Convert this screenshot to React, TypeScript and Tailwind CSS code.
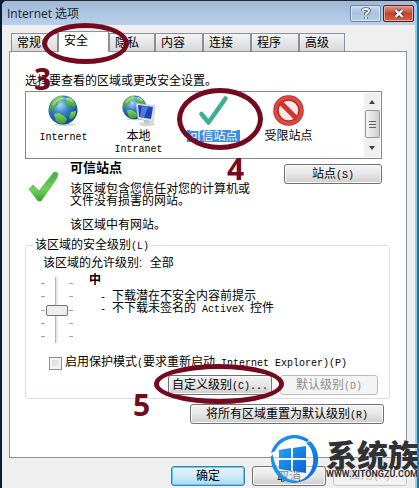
import React from "react";

const BUTTON =
  "h-5 rounded-[3px] border border-[#707070] bg-linear-to-b from-[#f3f3f3] via-[#e6e6e6] to-[#cdcdcd] pt-px text-center text-[12px] leading-[14px] whitespace-nowrap shadow-[inset_0_0_0_1px_#fafafa]";

// Latin text is set in a half-width face so that two letters take one Chinese character.
function Latin({ children }: { children: React.ReactNode }) {
  return <span className="font-['Liberation_Mono',monospace] text-[10px] whitespace-pre">{children}</span>;
}

function Globe() {
  return (
    <>
      <defs>
        <radialGradient id="sea" cx="40%" cy="32%" r="70%">
          <stop offset="0" stopColor="#a9dcf5" />
          <stop offset="0.4" stopColor="#3a86d0" />
          <stop offset="1" stopColor="#123f8c" />
        </radialGradient>
        <linearGradient id="land" x1="0" y1="0" x2="0" y2="1">
          <stop offset="0" stopColor="#8fd45c" />
          <stop offset="1" stopColor="#2e9a2e" />
        </linearGradient>
      </defs>
      <ellipse cx="17" cy="29.5" rx="11" ry="1.5" fill="#cfd3d6" />
      <circle cx="15" cy="15" r="14.5" fill="url(#sea)" />
      <path d="M3 9 6 4l6-3 4 1-2 3-3 1-1 4-4 2-2 5-3-3z" fill="url(#land)" />
      <path d="m19 2 5 2 4 6-2 3-3-2-3 1-3-3 1-3z" fill="url(#land)" />
      <path d="m6 19 5-1 5 3 3 3-2 4-5 1-4-3z" fill="url(#land)" />
      <path d="m23 17 5-1-1 5-4 4-2-3z" fill="url(#land)" />
      <path d="M5 10c4-7 14-9 20-3" stroke="#fff" strokeOpacity=".35" strokeWidth="2" fill="none" />
    </>
  );
}

const zones = [
  {
    lines: [<Latin key="a">Internet</Latin>],
    icon: (
      <svg width="31" height="31" viewBox="0 0 31 31" aria-hidden="true"><Globe /></svg>
    ),
  },
  {
    lines: ["本地", <Latin key="a">Intranet</Latin>],
    icon: (
      <svg width="33" height="31" viewBox="0 0 33 31" aria-hidden="true">
        <g transform="scale(.82)"><Globe /></g>
        <ellipse cx="25" cy="29" rx="8" ry="2" fill="#d3d5d6" />
        <path d="m22 24 5 1v4l-5-1z" fill="#c4c8cc" />
        <path d="m14 8 19 3-2 16-15-3z" fill="#dfe3ea" stroke="#a9afb8" strokeWidth=".6" />
        <path d="m16 10 15 2-2 12-12-2z" fill="#1b43b5" />
        <path d="m20 11 6 1-4 11-4-1z" fill="#668bea" opacity=".75" />
      </svg>
    ),
  },
  {
    lines: ["可信站点"],
    selected: true,
    icon: (
      <svg width="31" height="31" viewBox="0 0 31 31" aria-hidden="true">
        <path d="M3.500 19 10.500 27.500 27.500 3.500" fill="none" stroke="#3fae93" strokeWidth="4.500" strokeLinejoin="round" strokeLinecap="round" />
      </svg>
    ),
  },
  {
    lines: ["受限站点"],
    icon: (
      <svg width="33" height="31" viewBox="0 0 33 31" aria-hidden="true">
        <circle cx="16.500" cy="15.500" r="12.500" fill="#fbe9e7" stroke="#b5201c" strokeWidth="5.500" />
        <circle cx="16.500" cy="15.500" r="12.800" fill="none" stroke="#dd4a42" strokeWidth="3.500" />
        <path d="m8 7 17 17" stroke="#cf332c" strokeWidth="5" />
      </svg>
    ),
  },
];

const tabs = [
  ["常规", "w-[47px]"],
  ["安全", "w-[51px]"],
  ["隐私", "w-[46px]"],
  ["内容", "w-[48px]"],
  ["连接", "w-[48px]"],
  ["程序", "w-[48px]"],
  ["高级", "w-[46px]"],
];

function Ring({ className }: { className: string }) {
  return <div className={`pointer-events-none absolute rounded-[50%] border-[5px] border-[#740a20] ${className}`} />;
}

function Digit({ className, children }: { className: string; children: React.ReactNode }) {
  return (
    <span className={`pointer-events-none absolute font-['Noto_Sans',sans-serif] text-[30px] leading-[30px] font-bold text-[#740a20] ${className}`}>
      {children}
    </span>
  );
}

export default function App() {
  return (
    <div className="relative min-h-screen overflow-hidden bg-linear-to-r from-[#0c1a38] from-50% to-[#2a6aa8] to-50% pt-px pr-[2px] pl-[2px] font-['Liberation_Sans','Noto_Sans_CJK_SC',sans-serif] text-[12px] text-black">
      <div className="absolute top-0 right-0 left-0 h-px bg-[#22262e]" />
      <main className="min-h-[calc(100vh-1px)] rounded-t-[5px] border-r-2 border-[#8fd3e8] bg-[#efefef] pr-[8px] pb-[2px] pl-[7px]">
        <header className="-mr-[8px] -ml-[7px] flex h-6 items-center rounded-t-[5px] bg-linear-to-b from-[#9fb9d6] to-[#b9d0ea] pr-[1px] pl-[5px]">
          <h1 className="flex-1 pt-[2px] font-['Open_Sans','Noto_Sans_CJK_SC',sans-serif] text-[12px] leading-4 text-[#1a1f28]">Internet 选项</h1>
          <div className="flex gap-[2px]">
            <button aria-label="帮助" className="flex h-[17px] w-[31px] items-center justify-center rounded-[2px] border border-[#6c85a5] bg-linear-to-b from-[#c8d8ea] via-[#aac2de] to-[#b8d0e8] shadow-[inset_0_0_0_1px_#dae6f2]">
              <svg width="10" height="13" viewBox="0 0 10 13" aria-hidden="true" fill="none">
                <path d="M2 4V3q0-1 3-1t3 2q0 1-3 3v1m0 2v2" stroke="#49566a" strokeWidth="3.500" />
                <path d="M2 4V3q0-1 3-1t3 2q0 1-3 3v1m0 2v2" stroke="#fff" strokeWidth="1.800" />
              </svg>
            </button>
            <button aria-label="关闭" className="flex h-[17px] w-[31px] items-center justify-center rounded-[2px] border border-[#5b1e22] bg-linear-to-b from-[#dc9a8c] via-[#c8402c] to-[#cf6449] shadow-[inset_0_0_0_1px_#e4a99b]">
              <svg width="12" height="11" viewBox="0 0 12 11" aria-hidden="true" fill="none">
                <path d="m2.500 2 7 7m0-7-7 7" stroke="#4f3a45" strokeWidth="4" />
                <path d="m2.500 2 7 7m0-7-7 7" stroke="#fff" strokeWidth="2.300" />
              </svg>
            </button>
          </div>
        </header>

        <div role="tablist" className="mt-[6px] flex h-5 items-end pl-[2px]">
          {tabs.map(([name, width], i) => (
            <button
              key={name}
              role="tab"
              aria-selected={i === 1}
              className={`${width} border border-b-0 border-[#8b8f96] pl-[5px] text-left ${
                i === 1 ? "relative -mb-px h-[21px] bg-white pb-[2px]" : "h-[18px] bg-linear-to-b from-[#f3f3f3] to-[#d9d9d9] pt-px"
              }`}
            >
              <span className="block leading-[14px]">{name}</span>
            </button>
          ))}
        </div>

        <section role="tabpanel" className="h-[407px] border border-[#8b8f96] bg-white pt-[22px] pr-4 pl-[15px]">
          <p className="leading-[14px]">选择要查看的区域或更改安全设置。</p>

          <div className="mt-[3px] mr-2 flex h-[68px] justify-between border border-[#828790]">
            <ul className="grid w-[300px] grid-cols-4 pt-[3px]">
              {zones.map((zone, i) => (
                <li key={i} className="flex flex-col items-center">
                  {zone.icon}
                  <span className={`mt-1 px-[2px] text-center leading-3 ${zone.selected ? "bg-[#3d8fe0] text-white" : ""}`}>
                    {zone.lines.map((line, n) => (
                      <span key={n} className="block h-3 leading-3">{line}</span>
                    ))}
                  </span>
                </li>
              ))}
            </ul>
            <div className="mt-px mr-px mb-px flex w-4 flex-col items-center bg-[#efefef]">
              <button aria-label="向上" className="flex h-[17px] w-4 items-center justify-center">
                <span className="border-x-[3px] border-b-4 border-x-transparent border-b-[#404040]" />
              </button>
              <div className="flex h-7 w-[15px] flex-col items-center justify-center gap-[2px] rounded-[2px] border border-[#979797] bg-linear-to-r from-[#f5f5f5] to-[#cfcfcf]">
                <i className="h-px w-[7px] bg-[#606060]" />
                <i className="h-px w-[7px] bg-[#606060]" />
                <i className="h-px w-[7px] bg-[#606060]" />
              </div>
              <button aria-label="向下" className="flex w-4 flex-1 items-center justify-center">
                <span className="border-x-[3px] border-t-4 border-x-transparent border-t-[#404040]" />
              </button>
            </div>
          </div>

          <div className="mr-2 flex h-[79px] items-start">
            <svg width="30" height="31" viewBox="0 0 30 31" aria-hidden="true" className="mt-3 ml-[3px]">
              <defs>
                <linearGradient id="tick" x1="0" y1="0" x2="0" y2="1">
                  <stop offset="0" stopColor="#3fae3c" />
                  <stop offset="0.6" stopColor="#6fd25a" />
                  <stop offset="1" stopColor="#35a52f" />
                </linearGradient>
              </defs>
              <path d="M1 18 5 14l6 6L26 1l4 1-1 5-16 23h-3z" fill="url(#tick)" stroke="#4cae47" strokeWidth=".6" />
            </svg>
            <div className="ml-3 flex-1 whitespace-nowrap">
              <h2 className="mt-[2px] text-[13px] leading-[14px] font-bold">可信站点</h2>
              <p className="mt-2 leading-3">该区域包含您信任对您的计算机或<br />文件没有损害的网站。</p>
              <p className="mt-3 leading-3">该区域中有网站。</p>
            </div>
            <button className={`${BUTTON} mt-[5px] w-[98px]`}>站点<Latin>(S)</Latin></button>
          </div>

          <fieldset className="h-[161px] rounded-[3px] border border-[#d5dfe5]">
            <legend className="ml-[7px] h-[14px] px-[2px] leading-[14px]">该区域的安全级别<Latin>(L)</Latin></legend>
            <p className="mt-1 ml-[17px] leading-[14px]">该区域的允许级别: <span className="ml-1">全部</span></p>
            <div className="mt-[3px] ml-[15px] flex h-[70px]">
              <div className="mt-1 flex h-[66px] gap-px">
                <div className="flex w-1 flex-col justify-between py-[6px]">
                  {[0, 1, 2, 3, 4].map((n) => <i key={n} className="h-px bg-[#a5a5a5]" />)}
                </div>
                <input
                  type="range"
                  aria-label="安全级别"
                  defaultValue={50}
                  className="h-[66px] w-[22px] appearance-none bg-[linear-gradient(90deg,transparent_9px,#b5b5b5_9px,#b5b5b5_10px,#e9e9e9_10px,#e9e9e9_12px,transparent_12px)] [writing-mode:vertical-lr] [&::-webkit-slider-thumb]:h-[11px] [&::-webkit-slider-thumb]:w-[22px] [&::-webkit-slider-thumb]:appearance-none [&::-webkit-slider-thumb]:rounded-[2px] [&::-webkit-slider-thumb]:border [&::-webkit-slider-thumb]:border-[#707070] [&::-webkit-slider-thumb]:bg-[#eeeeee]"
                />
                <div className="flex w-1 flex-col justify-between py-[6px]">
                  {[0, 1, 2, 3, 4].map((n) => <i key={n} className="h-px bg-[#a5a5a5]" />)}
                </div>
              </div>
              <div className="ml-4">
                <h3 className="leading-[14px] font-bold">中</h3>
                <ul className="mt-[3px] ml-[11px] leading-3">
                  <li className="h-3"><Latin>{"- "}</Latin>下载潜在不安全内容前提示</li>
                  <li className="h-3"><Latin>{"- "}</Latin>不下载未签名的<Latin>{" ActiveX "}</Latin>控件</li>
                </ul>
              </div>
            </div>
            <label className="mt-[13px] ml-[23px] flex h-[14px] items-center gap-[3px] leading-[14px] whitespace-nowrap">
              <input type="checkbox" className="size-[13px] appearance-none border border-[#8e8f8f] bg-linear-to-br from-[#cfd4d8] to-[#f6f6f6] shadow-[inset_0_0_0_2px_#f4f4f4]" />
              <span>启用保护模式<Latin>(</Latin>要求重新启动<Latin>{" Internet Explorer)(P)"}</Latin></span>
            </label>
            <div className="mt-[5px] mr-[11px] flex justify-end gap-2">
              <button className={`${BUTTON} w-[104px]`}>自定义级别<Latin>(C)...</Latin></button>
              <button disabled className="h-5 w-[98px] rounded-[3px] border border-[#b8bdc2] bg-[#f4f4f4] pt-px leading-[14px] whitespace-nowrap text-[#8c8c8c]">默认级别<Latin>(D)</Latin></button>
            </div>
          </fieldset>

          <div className="mt-[5px] mr-[6px] flex justify-end">
            <button className={`${BUTTON} w-[194px]`}>将所有区域重置为默认级别<Latin>(R)</Latin></button>
          </div>
        </section>

        <footer className="mt-2 flex justify-end gap-[7px]">
          <button className="h-5 w-[74px] rounded-[3px] border border-[#3c7fb1] bg-linear-to-b from-[#e6f5fb] via-[#d0eaf7] to-[#a5d9f0] leading-[14px] shadow-[inset_0_0_0_1px_#5fcdf0]">确定</button>
          <button className={`${BUTTON} w-[74px]`}>取消</button>
          <button disabled className="h-5 w-[74px] rounded-[3px] border border-[#c3c6c9] bg-[#f2f2f2] leading-[14px] text-[#b8b8b8]">应用<Latin>(A)</Latin></button>
        </footer>
      </main>

      <Ring className="top-[23px] left-[42px] h-[41px] w-[87px]" />
      <Ring className="top-[88px] left-[177px] h-[62px] w-[86px]" />
      <Ring className="top-[364px] left-[154px] h-[40px] w-[130px]" />
      <Digit className="top-[64px] left-[34px]">3</Digit>
      <Digit className="top-[154px] left-[227px]">4</Digit>
      <Digit className="top-[390px] left-[133px]">5</Digit>

      <div className="pointer-events-none absolute right-0 bottom-[5px] flex items-start gap-2">
        <svg width="48" height="48" viewBox="0 0 48 48" aria-hidden="true" fill="none">
          <defs>
            <linearGradient id="brand" x1="0" y1="0" x2="1" y2="1">
              <stop offset="0" stopColor="#1fa5f5" />
              <stop offset="1" stopColor="#0b62d8" />
            </linearGradient>
          </defs>
          <circle cx="24" cy="24" r="22" fill="#fff" fillOpacity=".5" />
          <path d="M1 18A24 24 0 0 1 39 5l-2 2A22 22 0 0 0 5 16z" fill="url(#brand)" />
          <path d="M1 21C0 34 9 47 24 48l11-3C20 49 6 40 3 20z" fill="#1593ee" />
          <path d="M40 6c8 7 11 19 5 30-5 8-12 11-21 12l-4-1c13 1 22-8 23-19 1-9-2-16-7-20z" fill="url(#brand)" />
          <path d="m9 15 12-2v10H9zm14-2 13-2v12H23zM9 25h12v11L9 34zm14 0h13v13l-13-2z" fill="url(#brand)" />
        </svg>
        <div className="mt-[3px] whitespace-nowrap text-[#303236]">
          <div className="h-[31px] font-['Noto_Sans_CJK_SC',sans-serif] text-[31px] leading-[32px] font-black [text-shadow:0_0_2px_#fff]">系统族</div>
          <div className="font-[Roboto,sans-serif] text-[9px] leading-[11px] font-bold [text-shadow:0_0_2px_#fff]">WWW.XITONGZU.COM</div>
        </div>
      </div>
    </div>
  );
}
